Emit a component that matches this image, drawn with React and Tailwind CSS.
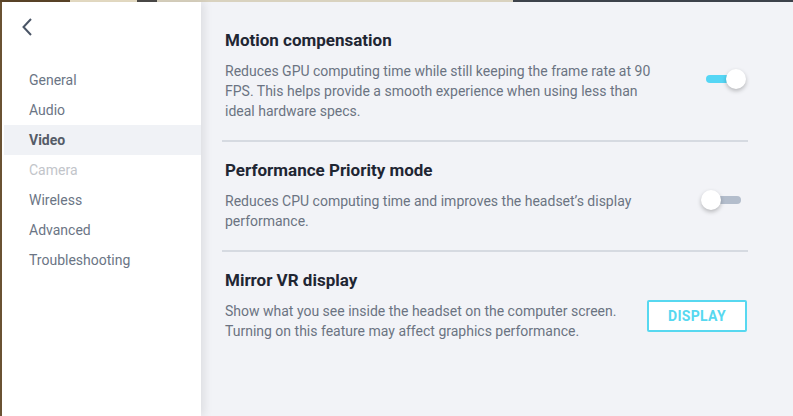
import React, { useState } from "react";

const menu = ["General", "Audio", "Video", "Camera", "Wireless", "Advanced", "Troubleshooting"];

const Toggle = ({ on }) => (
  <div className="relative w-[40px] h-[20px] flex items-center">
    <div className={`h-[8px] w-[30px] rounded-full ${on ? "bg-[#55d6f5]" : "bg-[#b3bdcc] ml-[10px]"}`} />
    <div
      className={`absolute top-0 ${on ? "left-[20px]" : "left-0"} w-[20px] h-[20px] rounded-full bg-white shadow-[0_2px_4px_rgba(0,0,0,0.25)]`}
    />
  </div>
);

const Setting = ({ title, text, children, last }) => (
  <div className={`flex items-start pt-[18px] ${last ? "" : "pb-[19px] border-b-2 border-[#d6dae1]"}`}>
    <div className="w-[456px] pl-[3px]">
      <h2 className="text-[17px] font-bold text-[#1f2633] leading-[20px]">{title}</h2>
      <p className="mt-[11px] max-w-[436px] text-[14px] leading-[20px] text-[#6b7382]">{text}</p>
    </div>
    <div className="flex-1 flex justify-end">{children}</div>
  </div>
);

export default function App() {
  const [active] = useState("Video");
  return (
    <div className="w-[793px] h-[416px] flex flex-col overflow-hidden font-['Roboto',sans-serif]">
      <div className="h-[2px] flex shrink-0">
        <div className="w-[70px] bg-[#5b4428]" />
        <div className="w-[67px] bg-[#e9dfc6]" />
        <div className="w-[20px] bg-[#4b4a48]" />
        <div className="w-[356px] bg-[#d9d2bf]" />
        <div className="flex-1 bg-[#3d424b]" />
      </div>
      <div className="flex flex-1">
        <div className="w-[2px] bg-[#6b5334]" />
        <aside className="w-[199px] bg-white relative z-10 shadow-[4px_0_8px_rgba(0,0,0,0.08)]">
          <div className="pl-[19px] pt-[16px] h-[63px]">
            <svg width="14" height="18" viewBox="0 0 14 18" fill="none" stroke="#4a5566" strokeWidth="2">
              <path d="M10 1 L2.5 9 L10 17" />
            </svg>
          </div>
          <nav className="flex flex-col">
            {menu.map((m) =>
              m === active ? (
                <div
                  key={m}
                  className="h-[30px] flex items-center ml-[2px] pl-[25px] bg-[#f0f2f6] text-[14px] font-bold text-[#555c68]"
                >
                  {m}
                </div>
              ) : (
                <div
                  key={m}
                  className={`h-[30px] flex items-center pl-[27px] text-[14px] ${
                    m === "Camera" ? "text-[#c2c5ca]" : "text-[#6b7585]"
                  }`}
                >
                  {m}
                </div>
              )
            )}
          </nav>
        </aside>
        <main className="flex-1 bg-[#f2f3f7] pl-[21px] pt-[10px]">
          <div className="w-[526px]">
            <Setting
              title="Motion compensation"
              text="Reduces GPU computing time while still keeping the frame rate at 90 FPS. This helps provide a smooth experience when using less than ideal hardware specs."
            >
              <div className="mt-[39px] mr-[2px]">
                <Toggle on />
              </div>
            </Setting>
            <Setting
              title="Performance Priority mode"
              text="Reduces CPU computing time and improves the headset’s display performance."
            >
              <div className="mt-[30px] mr-[7px]">
                <Toggle on={false} />
              </div>
            </Setting>
            <Setting
              last
              title="Mirror VR display"
              text="Show what you see inside the headset on the computer screen. Turning on this feature may affect graphics performance."
            >
              <button className="mt-[30px] mr-[1px] w-[100px] h-[32px] border-2 border-[#57d8f0] rounded-[2px] bg-white text-[#57d8f0] font-bold text-[14px] tracking-[0.3px]">
                DISPLAY
              </button>
            </Setting>
          </div>
        </main>
      </div>
    </div>
  );
}
